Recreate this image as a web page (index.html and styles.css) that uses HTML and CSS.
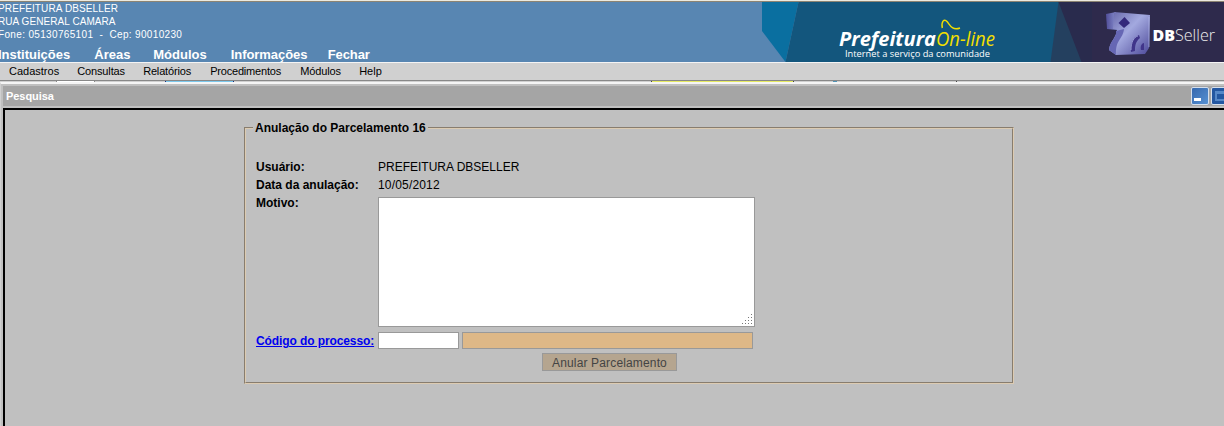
FILE: index.html
```html
<!DOCTYPE html>
<html lang="pt-BR">
<head>
<meta charset="utf-8">
<title>Prefeitura On-line</title>
<link rel="stylesheet" href="styles.css">
</head>
<body>
<header class="header">
  <div class="header-info">
    <div class="address">
      <div class="addr-name">PREFEITURA DBSELLER</div>
      <div class="addr-street">RUA GENERAL CAMARA</div>
      <div class="addr-phone">Fone: 05130765101 &nbsp;- &nbsp;Cep: 90010230</div>
    </div>
    <nav class="main-nav">
      <a>Instituições</a><a class="areas">Áreas</a><a>Módulos</a><a class="info">Informações</a><a class="close">Fechar</a>
    </nav>
  </div>
  <svg class="banner" width="462" height="60" viewBox="762 2 462 60">
    <defs>
      <linearGradient id="cube" x1="0" y1="0" x2="1" y2="1">
        <stop offset="0" stop-color="#6464a8"/><stop offset=".45" stop-color="#a3a9df"/><stop offset="1" stop-color="#4b4798"/>
      </linearGradient>
      <linearGradient id="side" x1="0" y1="0" x2="1" y2="0">
        <stop offset="0" stop-color="#504d98"/><stop offset="1" stop-color="#8990d0"/>
      </linearGradient>
    </defs>
    <path fill="#5886b2" d="M762 31L785 62H762z"/>
    <path fill="#0a6fa0" d="M762 2H798.500L785.500 62 762 31z"/>
    <path fill="#13567d" d="M798.500 2H1062V62H785.500z"/>
    <path fill="#24405f" d="M1058.500 2H1092V62H1050.500z"/>
    <path fill="#292b4d" d="M1058.500 2H1092V62H1081.500z"/>
    <path fill="#2e2a4c" d="M1092 2H1224V62H1092z"/>
    <text class="brand" x="839" y="45.500" textLength="97" lengthAdjust="spacingAndGlyphs">Prefeitura</text>
    <text class="brand-online" x="936" y="45.500" textLength="59" lengthAdjust="spacingAndGlyphs">On-line</text>
    <path class="tilde" d="M942.300 28C941 22 944 18 947 21.500C950 25 952 31 960 28"/>
    <text class="slogan" x="845" y="57" textLength="145" lengthAdjust="spacingAndGlyphs">Internet a serviço da comunidade</text>
    <path fill="url(#side)" d="M1106 14L1116 12 1117 30 1107 29z"/>
    <path fill="url(#cube)" d="M1114 12L1150 15 1149 48 1145 54 1116 55 1109 50C1110 41 1117 37 1117 29L1113 29z"/>
    <path fill="#34297b" d="M1124.500 17L1130 23 1124 28 1118.500 23z"/>
    <path fill="#6667b4" d="M1116 31L1124 29C1123 39 1115 40 1116 55L1109 50C1110 40 1117 38 1116 31z"/>
    <path fill="#40358a" d="M1131 52C1130 43 1133 37 1139 35L1140 38C1135 42 1135 47 1135 51zM1141 50C1140 46 1142 43 1144 43L1144 50z"/>
    <path fill="none" stroke="#b5bbeb" stroke-width=".7" d="M1131 50C1131 42 1134 37 1138 36M1149 17V47"/>
    <text class="logo-db" x="1152.500" y="41" textLength="22.500" lengthAdjust="spacingAndGlyphs">DB</text>
    <text class="logo-seller" x="1175" y="41" textLength="40" lengthAdjust="spacingAndGlyphs">Seller</text>
  </svg>
</header>
<nav class="menu">
  <a>Cadastros</a><a class="consult">Consultas</a><a class="reports">Relatórios</a><a class="procedures">Procedimentos</a><a class="modules">Módulos</a><a>Help</a>
</nav>
<svg class="strip" width="1224" height="1" viewBox="0 0 1224 1" shape-rendering="crispEdges">
  <path fill="#ffffff" d="M57 0h37v1H57z"/>
  <path fill="#888888" d="M56 0h1v1h-1zM94 0h1v1h-1z"/>
  <path fill="#7cc8ec" d="M166 0h67v1h-67z"/>
  <path fill="#182a78" d="M165 0h1v1h-1zM233 0h1v1h-1z"/>
  <path fill="#e6ea62" d="M652 0h141v1H652z"/>
  <path fill="#444444" d="M651 0h1v1h-1zM793 0h1v1h-1zM956 0h1v1h-1z"/>
  <path fill="#4f92b5" d="M833 0h4v1h-4z"/>
</svg>
<section class="window">
  <div class="titlebar">
    <span class="title">Pesquisa</span>
    <svg class="controls" width="33" height="20" viewBox="0 0 33 20">
      <defs><linearGradient id="button" x1="0" y1="0" x2="1" y2="1"><stop offset="0" stop-color="#3567ad"/><stop offset="1" stop-color="#5792d3"/></linearGradient></defs>
      <rect x=".5" y="1.500" width="17" height="17" rx="1.500" fill="url(#button)" stroke="#d5dfec"/>
      <path fill="#fff" d="M3 12h7v3H3z"/>
      <rect x="20.500" y="1.500" width="17" height="17" rx="1.500" fill="#2357a1" stroke="#d5dfec"/>
      <path fill="#5588c8" d="M24 5h10v10H24z"/><path fill="#2357a1" d="M26 8h7v5h-7z"/>
    </svg>
  </div>
  <main class="content">
    <fieldset class="panel">
      <legend>Anulação do Parcelamento 16</legend>
      <div class="form">
        <b>Usuário:</b><span>PREFEITURA DBSELLER</span>
        <b>Data da anulação:</b><span class="date">10/05/2012</span>
        <b>Motivo:</b>
        <div class="reason">
          <svg width="10" height="10" viewBox="0 0 10 10" shape-rendering="crispEdges"><path fill="#777" d="M9 0h1v1H9zM6 3h1v1H6zM9 3h1v1H9zM3 6h1v1H3zM6 6h1v1H6zM9 6h1v1H9zM0 9h1v1H0zM3 9h1v1H3zM6 9h1v1H6zM9 9h1v1H9z"/></svg>
        </div>
        <a class="process" href="#">Código do processo:</a>
        <div class="process-fields"><input class="code"><input class="description" readonly></div>
      </div>
      <button class="submit" disabled>Anular Parcelamento</button>
    </fieldset>
  </main>
</section>
</body>
</html>
```
FILE: styles.css
```css
* { box-sizing: border-box; }
body { margin: 0; width: 1224px; height: 426px; overflow: hidden; background: #c0c0c0; font-family: "Liberation Sans", Arial, sans-serif; font-size: 12px; color: #000; }
.header { display: flex; height: 63px; border-top: 1px solid #ebe9df; border-bottom: 1px solid #f4f4f4; background: #5886b2; box-shadow: inset 0 1px #8c8473; }
.header-info { width: 762px; padding-top: 1px; color: #fff; overflow: hidden; white-space: nowrap; }
.address { height: 45px; margin-left: -2px; font-size: 10px; line-height: 13px; }
.addr-name { letter-spacing: .12px; }
.addr-street { letter-spacing: .07px; }
.addr-phone { letter-spacing: .34px; }
.main-nav { display: flex; gap: 24px; margin-left: -2px; font-size: 13px; font-weight: bold; line-height: 15px; }
.areas { width: 35px; }
.info { width: 77px; letter-spacing: -.05px; }
.close { margin-left: -4px; letter-spacing: -.1px; }
.banner { margin-top: 1px; display: block; }
.brand { font: italic bold 20px "Open Sans", sans-serif; fill: #fff; }
.brand-online { font: italic 20.5px "Open Sans", sans-serif; fill: #f2df00; }
.tilde { fill: none; stroke: #f2df00; stroke-width: 1.4; }
.slogan { font: 9.5px "Open Sans", sans-serif; fill: #fff; }
.logo-db { font: 800 16.5px "Open Sans", sans-serif; fill: #fff; }
.logo-seller { font: 300 17px "Open Sans", sans-serif; fill: #eee; }
.menu { display: flex; gap: 18px; height: 18px; padding-left: 9px; line-height: 17px; font-size: 11px; white-space: nowrap; background: #d0d0d0; border-bottom: 1px solid #888; }
.consult { width: 48px; letter-spacing: -.12px; }
.reports { width: 49px; letter-spacing: -.17px; }
.procedures { width: 72px; letter-spacing: -.19px; }
.modules { width: 41px; letter-spacing: -.12px; }
.strip { display: block; background: #d0d0d0; }
.window { height: 344px; border-top: 2px solid #f5f5f5; padding: 2px 0 0 3px; border-left: 1px solid #d0d0d0; }
.titlebar { display: flex; align-items: center; justify-content: space-between; height: 20px; padding-left: 2px; margin-left: -1px; background: #a5a5a5; }
.title { padding-left: 1px; color: #fff; font-size: 11px; font-weight: bold; letter-spacing: -.05px; }
.controls { display: block; }
.content { height: 320px; margin: 2px 0 0 -1px; padding: 11px 0 0 239px; border-top: 2px solid #000; border-left: 2px solid #000; }
.panel { width: 770px; height: 263px; margin: 0; padding: 0 10px; border: 2px groove #dccbb2; }
legend { height: 14px; margin-left: -3px; padding: 0 2px; line-height: 14px; font-weight: bold; }
.form { display: grid; grid-template-columns: 122px 378px; grid-template-rows: 18px 18px 138px 18px; padding-top: 23px; line-height: 18px; }
.date { letter-spacing: .17px; }
.reason { display: flex; justify-content: flex-end; align-items: flex-end; width: 377px; height: 130px; margin-top: 3px; padding: 2px; border: 1px solid #999; background: #fff; }
.process { color: #0000ee; font-weight: bold; white-space: nowrap; letter-spacing: -.1px; }
.process-fields { display: flex; gap: 3px; }
.process-fields input { height: 17px; padding: 0; border: 1px solid #999; border-radius: 0; }
.code { width: 81px; }
.description { width: 291px; background: #deb887; }
.submit { display: block; width: 135px; height: 18px; margin: 3px 0 0 286px; padding: 0; border: 1px solid #999; background: #b5a58f; color: #444; font: 12px "Liberation Sans", Arial, sans-serif; line-height: 18px; letter-spacing: .15px; }
```
